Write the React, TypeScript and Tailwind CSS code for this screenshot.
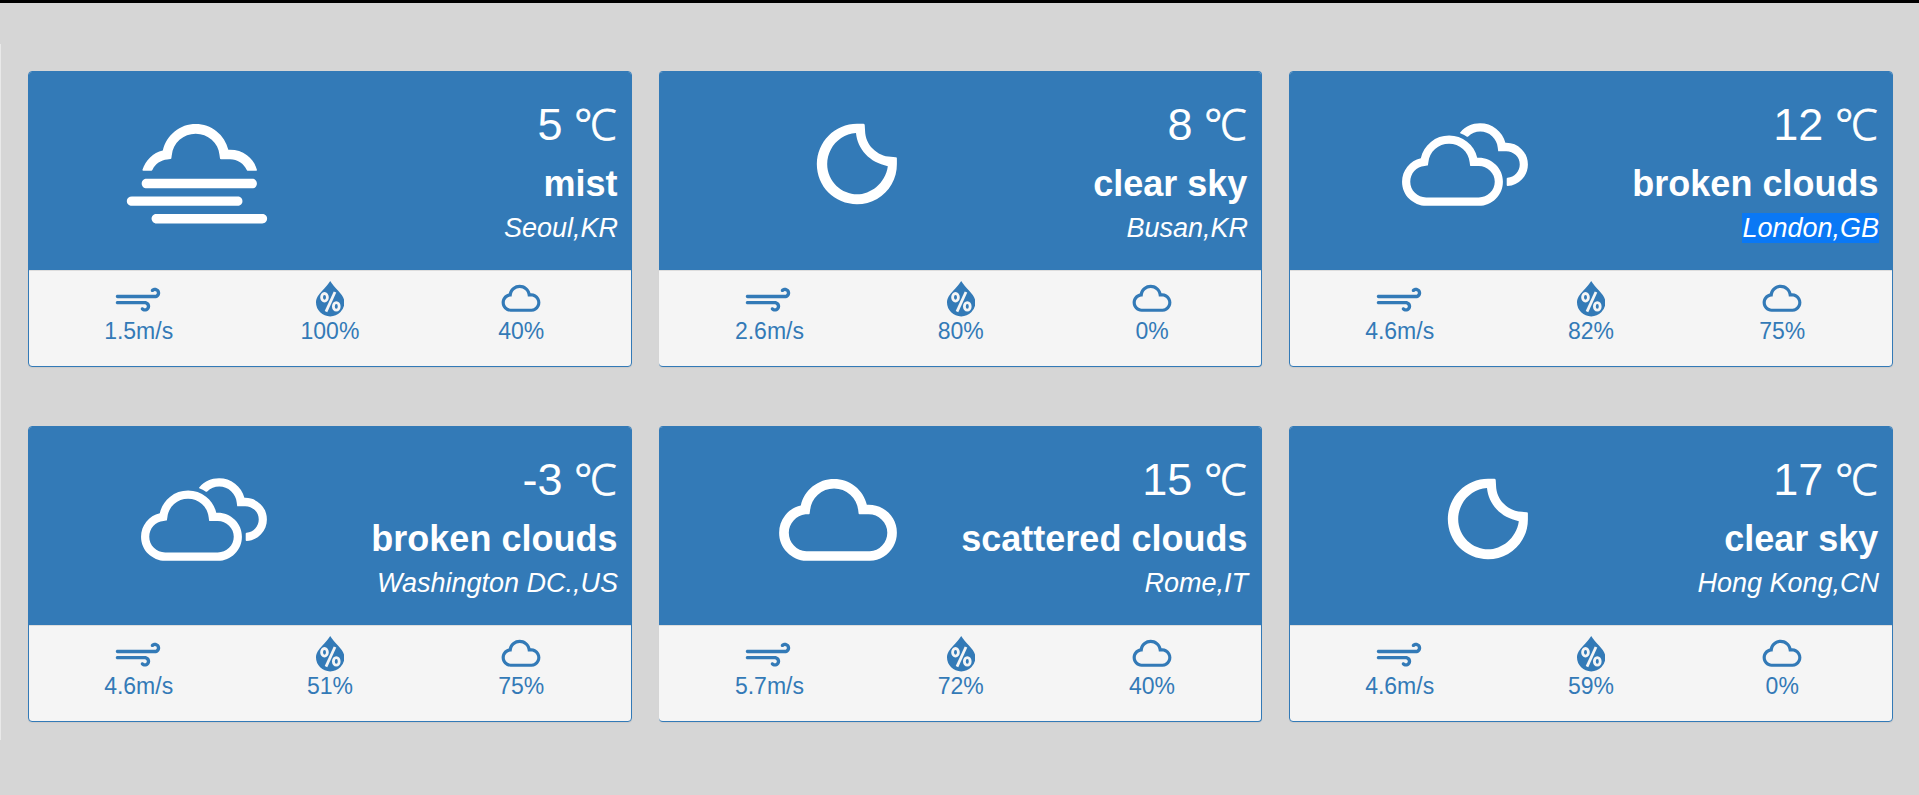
import React from "react";
import { WiCloud, WiCloudy, WiFog, WiNightClear, WiStrongWind } from "react-icons/wi";
import type { IconType } from "react-icons";

type Sky = "fog" | "night" | "cloudy" | "cloud";

type City = {
  temp: number;
  sky: string;
  place: string;
  icon: Sky;
  wind: string;
  humidity: string;
  clouds: string;
  selected?: boolean;
  flushLeft?: boolean;
};

const skyIcons: Record<Sky, { Icon: IconType; offset: string }> = {
  fog: { Icon: WiFog, offset: "ml-[82.5px]" },
  night: { Icon: WiNightClear, offset: "ml-[112.5px]" },
  cloudy: { Icon: WiCloudy, offset: "ml-[89.5px]" },
  cloud: { Icon: WiCloud, offset: "ml-[94px]" },
};

const cities: City[] = [
  { temp: 5, sky: "mist", place: "Seoul,KR", icon: "fog", wind: "1.5m/s", humidity: "100%", clouds: "40%" },
  { temp: 8, sky: "clear sky", place: "Busan,KR", icon: "night", wind: "2.6m/s", humidity: "80%", clouds: "0%", flushLeft: true },
  { temp: 12, sky: "broken clouds", place: "London,GB", icon: "cloudy", wind: "4.6m/s", humidity: "82%", clouds: "75%", selected: true },
  { temp: -3, sky: "broken clouds", place: "Washington DC.,US", icon: "cloudy", wind: "4.6m/s", humidity: "51%", clouds: "75%" },
  { temp: 15, sky: "scattered clouds", place: "Rome,IT", icon: "cloud", wind: "5.7m/s", humidity: "72%", clouds: "40%", flushLeft: true },
  { temp: 17, sky: "clear sky", place: "Hong Kong,CN", icon: "night", wind: "4.6m/s", humidity: "59%", clouds: "0%" },
];

function Drop() {
  return (
    <svg viewBox="0 0 28.4 35.4" className="h-[35.4px] w-[28.4px]">
      <path
        d="M14.2 0C16 3 19 6.200 22.200 9.800C25.600 13.600 28.400 17 28.400 21.300A14.200 14.100 0 0 1 0 21.300C0 17 2.800 13.600 6.200 9.800C9.400 6.200 12.400 3 14.200 0Z"
        fill="currentColor"
      />
      <g fill="none" stroke="#f5f5f5" strokeWidth="2.8">
        <ellipse cx="8.500" cy="16.300" rx="2.900" ry="3.800" />
        <ellipse cx="20.300" cy="25.400" rx="2.900" ry="3.800" />
        <path d="M10 30.600L19 11" />
      </g>
    </svg>
  );
}

function Stat({ value, children }: { value: string; children: React.ReactNode }) {
  return (
    <div className="flex w-[191.3px] flex-col items-center">
      <div className="flex h-[56px] items-center justify-center">{children}</div>
      <span className="-mt-[12px] text-[23px] leading-[32px]">{value}</span>
    </div>
  );
}

function Card({ city }: { city: City }) {
  const { Icon, offset } = skyIcons[city.icon];
  return (
    <section
      className={`h-[296px] overflow-hidden rounded-[4px] border border-[#337ab7] bg-[#f5f5f5] shadow-[0_1px_1px_rgba(0,0,0,0.05)] ${
        city.flushLeft ? "border-l-0" : ""
      }`}
    >
      <header
        className="flex h-[198px] justify-between bg-[#337ab7] pr-[13px] text-white"
      >
        <div className={`mt-[10px] w-[150px] ${offset}`}>
          <Icon className="size-[170px]" />
        </div>
        <div className="flex flex-col items-end whitespace-nowrap pt-[26px]">
          <div className="h-[54px] text-[45px] leading-[54px]">
            {city.temp}{" "}
            <span className="-ml-px mr-[1.5px] font-['Noto_Sans'] text-[43px] font-light leading-none [-webkit-text-stroke:0.8px_white]">
              ℃
            </span>
          </div>
          <div className="mr-[0.6px] mt-[12px] text-[36px] font-bold leading-[40px]">{city.sky}</div>
          <div className="mt-[9px] text-[27px] italic leading-[30px]">
            <span className={city.selected ? "bg-[#0a78f5]" : ""}>{city.place}</span>
          </div>
        </div>
      </header>
      <div
        className={`flex h-[96px] border-t border-[#dddddd] text-[#337ab7] ${city.flushLeft ? "pl-[14.8px]" : "pl-[14px]"}`}
      >
        <Stat value={city.wind}>
          <WiStrongWind className="-ml-[2px] size-[56px]" />
        </Stat>
        <Stat value={city.humidity}>
          <Drop />
        </Stat>
        <Stat value={city.clouds}>
          <WiCloud className="size-[56px]" />
        </Stat>
      </div>
    </section>
  );
}

export default function App() {
  return (
    <main className="h-[795px] overflow-hidden border-t-[3px] border-black bg-[#d6d6d6] pt-[41px] font-['Liberation_Sans',Arial,sans-serif]">
      <div className="grid h-[696px] grid-cols-[604px_603px_604px] content-start gap-x-[27px] gap-y-[59px] border-l border-[#e9e9e9] pl-[27px] pt-[27px]">
        {cities.map((city) => (
          <Card key={city.place} city={city} />
        ))}
      </div>
    </main>
  );
}
